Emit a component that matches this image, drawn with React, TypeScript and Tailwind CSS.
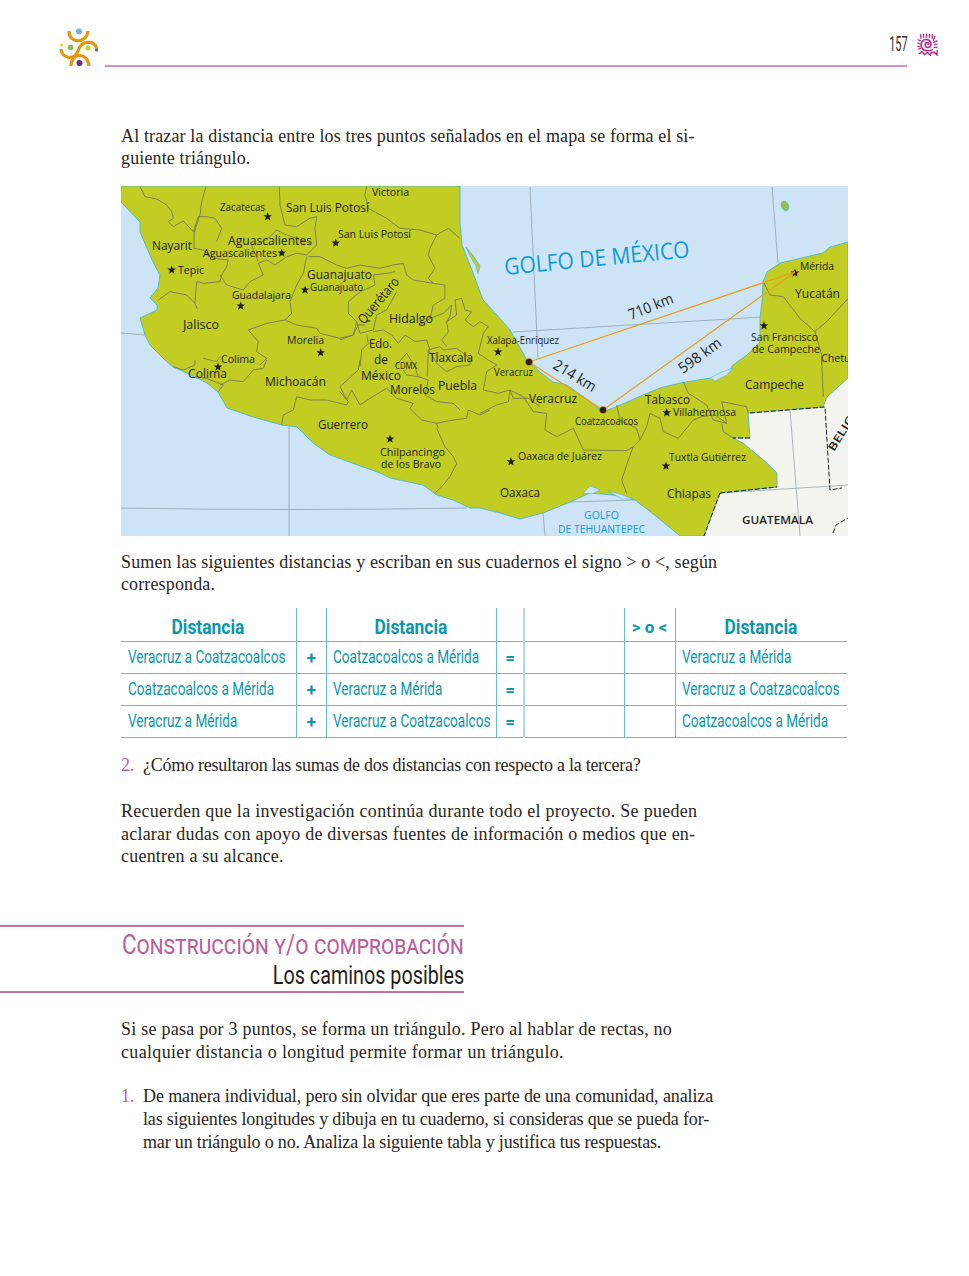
const ink = '#2a2522';

// label on the map, x/y = left end of the baseline, w = measured width
const Label = ({ t, x, y, w, s = 13, fill = '#231f20', rot = 0, weight = 400 }: { t: string; x: number; y: number; w: number; s?: number; fill?: string; rot?: number; weight?: number }) => (
  <text
    x={x}
    y={y}
    fontSize={s}
    fill={fill}
    fontWeight={weight}
    textLength={w}
    lengthAdjust="spacingAndGlyphs"
    transform={rot ? `rotate(${rot} ${x} ${y})` : undefined}
  >
    {t}
  </text>
);

const Star = ({ x, y, r = 4.6 }: { x: number; y: number; r?: number }) => {
  const pts = [];
  for (let i = 0; i < 10; i++) {
    const a = -Math.PI / 2 + (i * Math.PI) / 5;
    const d = i % 2 ? r * 0.42 : r;
    pts.push(`${(x + d * Math.cos(a)).toFixed(2)},${(y + d * Math.sin(a)).toFixed(2)}`);
  }
  return <polygon points={pts.join(' ')} fill="#231f20" />;
};

const labels = [
  { t: 'Victoria', x: 372, y: 196, w: 37, s: 11 },
  { t: 'Zacatecas', x: 220, y: 211, w: 45, s: 10 },
  { t: 'San Luis Potosí', x: 286, y: 212, w: 83, s: 12.5 },
  { t: 'San Luis Potosí', x: 338, y: 238, w: 73, s: 11 },
  { t: 'Nayarit', x: 152, y: 250, w: 40, s: 12.5 },
  { t: 'Aguascalientes', x: 228, y: 245, w: 84, s: 13 },
  { t: 'Aguascalientes', x: 203, y: 257, w: 74, s: 11 },
  { t: 'Tepic', x: 178, y: 274, w: 26, s: 11 },
  { t: 'Guanajuato', x: 307, y: 279, w: 65, s: 13 },
  { t: 'Guanajuato', x: 310, y: 291, w: 53, s: 10.5 },
  { t: 'Guadalajara', x: 232, y: 299, w: 59, s: 11 },
  { t: 'Querétaro', x: 364, y: 325, w: 56, s: 13.5, rot: -50 },
  { t: 'Hidalgo', x: 389, y: 323, w: 44, s: 13 },
  { t: 'Jalisco', x: 183, y: 329, w: 36, s: 13 },
  { t: 'Morelia', x: 287, y: 344, w: 37, s: 11.5 },
  { t: 'Edo.', x: 369, y: 348, w: 23, s: 13 },
  { t: 'de', x: 374, y: 364, w: 14, s: 13 },
  { t: 'Tlaxcala', x: 429, y: 362, w: 44, s: 13 },
  { t: 'Colima', x: 221, y: 363, w: 34, s: 11.5 },
  { t: 'CDMX', x: 395, y: 369, w: 22, s: 8.5 },
  { t: 'Colima', x: 188, y: 378, w: 39, s: 13 },
  { t: 'México', x: 361, y: 380, w: 40, s: 13 },
  { t: 'Michoacán', x: 265, y: 386, w: 61, s: 13 },
  { t: 'Morelos', x: 390, y: 394, w: 45, s: 13 },
  { t: 'Puebla', x: 438, y: 390, w: 39, s: 13 },
  { t: 'Guerrero', x: 318, y: 429, w: 50, s: 13 },
  { t: 'Chilpancingo', x: 380, y: 456, w: 65, s: 11.5 },
  { t: 'de los Bravo', x: 381, y: 468, w: 60, s: 11.5 },
  { t: 'Xalapa-Enríquez', x: 487, y: 344, w: 72, s: 10.5 },
  { t: 'Veracruz', x: 494, y: 376, w: 39, s: 10.5 },
  { t: 'Veracruz', x: 529, y: 403, w: 48, s: 13 },
  { t: 'Coatzacoalcos', x: 575, y: 425, w: 63, s: 10.5 },
  { t: 'Tabasco', x: 645, y: 404, w: 45, s: 13 },
  { t: 'Villahermosa', x: 673, y: 416, w: 63, s: 11 },
  { t: 'Oaxaca de Juárez', x: 518, y: 460, w: 84, s: 11 },
  { t: 'Tuxtla Gutiérrez', x: 669, y: 461, w: 77, s: 11 },
  { t: 'Oaxaca', x: 500, y: 497, w: 40, s: 13 },
  { t: 'Chiapas', x: 667, y: 498, w: 44, s: 13 },
  { t: 'Campeche', x: 745, y: 389, w: 59, s: 13 },
  { t: 'Mérida', x: 800, y: 270, w: 34, s: 11 },
  { t: 'Yucatán', x: 795, y: 298, w: 45, s: 13 },
  { t: 'San Francisco', x: 751, y: 341, w: 67, s: 11 },
  { t: 'de Campeche', x: 752, y: 353, w: 68, s: 11 },
  { t: 'Chetumal', x: 821, y: 362, w: 48, s: 11 },
  { t: 'GOLFO', x: 584, y: 519, w: 35, s: 11, fill: '#0f9bd7' },
  { t: 'DE TEHUANTEPEC', x: 558, y: 533, w: 87, s: 11, fill: '#0f9bd7' },
  { t: 'GUATEMALA', x: 742, y: 524, w: 71, s: 10, weight: 600 },
  { t: 'BELICE', x: 834, y: 452, w: 46, s: 11, rot: -58, weight: 600 },
  { t: 'GOLFO DE MÉXICO', x: 505, y: 275, w: 186, s: 23, fill: '#0f9bd7', rot: -5.5 },
  { t: '710 km', x: 631, y: 320, w: 47, s: 15, rot: -22 },
  { t: '598 km', x: 683, y: 374, w: 49, s: 15, rot: -36 },
  { t: '214 km', x: 552, y: 368, w: 47, s: 15, rot: 31 },
];

const stars = [
  [267.7, 216.7], [335.7, 243], [281.7, 253], [171.7, 270], [305, 290], [240.7, 306], [320.7, 352.7], [218, 367],
  [390, 439], [498, 352], [511, 461.7], [666.7, 412.7], [666, 466], [795, 273], [764, 325.7],
];

const MexicoMap = () => (
  <svg viewBox="121 186 727 350" className="block w-[727px] h-[350px]" style={{ fontFamily: '"Open Sans", sans-serif' }}>
    <rect x="121" y="186" width="727" height="350" fill="#cce4f5" />

    {/* Guatemala, Belice */}
    <polygon points="748,413 823,407 827,397 848,378 848,536 704,536 720,493 777,487 777,473 767,463 743,443 733,438 750,438" fill="#f4f4ee" />

    {/* graticule */}
    <g stroke="#8d9aa6" strokeWidth="0.7" fill="none">
      <path d="M530,187 L538,358" />
      <path d="M772,187 L778,263" />
      <path d="M513,332 L763,317" />
      <path d="M289,425 L289,536" />
      <path d="M121,333 L145,335" />
      <path d="M121,508 Q290,511 467,508" />
      <path d="M543,513 L545,536" />
      <path d="M570,502 L635,500" />
      <path d="M790,410 L800,536" />
      <path d="M720,493 L848,485" />
    </g>

    {/* land */}
    <path
      fill="#c1cd23"
      stroke="#3fb1d6"
      strokeWidth="0.8"
      d="M121,186 L460,186 L460,222 L462,245 L472,270 L483,300 L497,315 L510,330 L527,360 L540,372 L553,382 L567,385 L585,398 L603,412 L625,403 L643,395 L660,388 L680,383 L710,378 L727,373 L733,365 L747,355 L760,342 L760,318 L762,302 L763,282 L767,272 L780,263 L823,253 L830,247 L848,242 L848,378 L827,397 L823,407 L748,413 L750,438 L733,438 L743,443 L767,463 L777,473 L777,487 L720,493 L704,536 L680,536 L657,517 L635,500 L613,495 L590,493 L570,502 L543,513 L520,519 L500,513 L480,508 L470,508 L453,500 L437,495 L423,485 L390,478 L380,473 L330,455 L313,443 L297,427 L282,425 L253,417 L227,408 L218,392 L207,383 L187,373 L173,367 L165,360 L150,345 L145,335 L140,318 L157,310 L157,305 L150,298 L158,288 L160,275 L153,262 L140,232 L140,222 L121,202 Z"
    />

    {/* lagoons and island */}
    <path d="M466,247 L472,254 L480,266 L478,274 L476,266 L470,256 Z" fill="#c1cd23" stroke="#3fb1d6" strokeWidth="0.6" />
    <g fill="#cce4f5" stroke="#3fb1d6" strokeWidth="0.5">
      <path d="M583,493 L590,486 L600,490 L592,494 Z" />
      <path d="M608,491 L620,494 L633,499 L622,499 Z" />
      <path d="M710,378 L722,372 L733,368 L727,375 L715,381 Z" />
    </g>
    <ellipse cx="785" cy="206" rx="3.5" ry="5" fill="#9dbf3a" stroke="#3fb1d6" strokeWidth="0.6" transform="rotate(-25 785 206)" />

    {/* state borders, traced on 3x crops */}
    <g fill="none" stroke="#6f6f5c" strokeWidth="2.4" strokeLinejoin="round">
      <g transform="translate(120 185) scale(0.3333)">
        <path d="M60,5 L75,35 110,42 140,60 155,80 160,100 145,110 160,125 190,108 220,140 235,95 260,95 285,100 305,130 290,170" />
        <path d="M258,5 L245,50 240,90 222,145 222,190 250,195 280,220 325,225 320,245 305,270 300,290 250,295 230,290 225,355 200,330 150,320 115,345" />
        <path d="M225,355 L232,372" />
        <path d="M300,270 L320,300 370,315 390,290 430,270 415,235 440,225 465,240 500,215 530,205 560,210 590,180 585,130 590,95 570,100 530,125 495,120 480,60 478,5" />
        <path d="M415,230 L395,180 440,165 470,135 500,150 530,160 570,175" />
        <path d="M565,215 L600,215 650,240 680,250 720,240 780,250 820,240 850,235 860,270 880,285 940,295 975,300 975,340 940,360 930,400 900,420" />
        <path d="M560,215 L550,265 530,300 510,350 515,385 495,405 440,415 385,435 415,470 410,500 440,520 420,540" />
        <path d="M495,405 L530,420 590,430 600,445 660,460 700,450 715,420 735,420" />
        <path d="M740,5 L735,30 745,70 800,100 840,130 900,135 950,150 930,190 925,210 945,250 925,280 940,295" />
        <path d="M950,150 L985,130 1020,160" />
        <path d="M250,520 L290,530 300,515" />
      </g>
      <g transform="translate(340 270) scale(0.3333)">
        <path d="M25,95 L60,65 105,45 100,15 140,10 165,5" />
        <path d="M25,95 L25,130 50,155 60,190 100,180 110,135 140,120 170,65" />
        <path d="M100,185 L130,180 155,195 175,220 195,195 225,215 260,210 270,240" />
        <path d="M265,240 L300,230 310,240 350,235 390,265 390,285 350,290 320,305 290,280 275,255 Z" />
        <path d="M270,145 L310,130 335,105 330,140 320,155 325,185 305,210 320,230" />
        <path d="M320,155 L350,135 345,90 365,85 375,120 395,125 375,150 400,170 420,155 445,170 430,190 415,250 445,270 470,285 440,305 430,360 475,370 510,360 520,385 565,385 600,410" />
        <path d="M80,195 L85,220 65,240 60,290" />
        <path d="M165,290 L200,250 225,290 235,320 200,315 190,300" />
        <path d="M235,320 L265,330 255,375 290,395 340,400 360,420" />
        <path d="M265,240 L262,320" />
        <path d="M50,155 L40,195 0,210" />
      </g>
      <g transform="translate(120 360) scale(0.3333)">
        <path d="M720,0 L715,30 660,80 680,120 695,90 720,135 750,115 800,85 830,115 880,130 870,145 905,180 950,190 1000,180 1040,175 1045,150 1080,165 1110,150" />
        <path d="M485,195 L490,165 520,150 530,110 570,120 620,120 680,135 685,125 660,95" />
        <path d="M160,20 L190,30 225,15 225,0" />
        <path d="M225,50 L260,55 310,75 295,95" />
        <path d="M300,75 L330,60 370,65 400,30 430,25 440,0" />
        <path d="M950,205 L975,260 1000,290 1010,310 990,350 970,375 945,400" />
        <path d="M950,190 L955,205" />
      </g>
      <g transform="translate(480 360) scale(0.3333)">
        <path d="M0,160 L50,135 85,125 90,90 130,110 160,155 200,160 195,210 230,230 280,205 310,270 440,272 460,260 480,240 500,200 510,160 540,175 550,215 595,235 640,180 665,170 705,165 740,190" />
        <path d="M460,260 L445,300 425,360 440,400" />
        <path d="M410,135 L420,180 470,205 480,240" />
        <path d="M610,65 L625,100 680,135 700,180 740,190 725,125 800,140 805,160" />
        <path d="M725,190 L730,215 760,235" />
        <path d="M1025,0 L1030,110" />
      </g>
      <g transform="translate(480 185) scale(0.3333)">
        <path d="M850,290 L870,330 910,335 960,400 1005,440 1025,510 1025,540" />
        <path d="M1005,440 L1040,410 1105,340" />
      </g>
    </g>

    {/* dashed frontiers */}
    <g fill="none" stroke="#231f20" strokeWidth="1" strokeDasharray="5 2">
      <path d="M750,413 L825,407 L830,490 L842,488" />
      <path d="M750,438 L733,438" />
      <path d="M720,493 L777,487" />
      <path d="M720,493 L704,536" />
      <path d="M833,533 L836,525 L848,518" />
    </g>

    {stars.map(([x, y], i) => (
      <Star key={i} x={x} y={y} />
    ))}

    {/* triangle */}
    <g fill="none" stroke="#e8a013" strokeWidth="1.3">
      <path d="M529,362 L795,272 L603,410 Z" />
    </g>
    <circle cx="529" cy="362" r="3.6" fill="#231f20" stroke="#e8a013" strokeWidth="0.6" />
    <circle cx="603" cy="410" r="3.6" fill="#231f20" stroke="#e8a013" strokeWidth="0.6" />

    {labels.map((l, i) => (
      <Label key={i} {...l} />
    ))}
  </svg>
);

const Logo = () => (
  <svg viewBox="0 0 60 55" className="absolute left-[50px] top-[20px] w-[60px] h-[55px]" fill="none">
    <g stroke="#e0980f" strokeWidth="3.2">
      <path d="M19,11 C19,24 37,24 38,11" />
      <path d="M11,29 C12,39 25,41 28.5,30 C31,21 44,19 47,29" />
      <path d="M21,46 C21,32 38,32 39,46" />
    </g>
    <circle cx="29" cy="11.5" r="2.9" fill="#6db3e6" />
    <circle cx="20.5" cy="27.5" r="2.8" fill="#8dbb5c" />
    <circle cx="38" cy="28" r="2.6" fill="#c6d22a" />
    <circle cx="29.5" cy="43" r="3" fill="#6f2a8e" />
    <circle cx="11.5" cy="25" r="1.5" fill="#f2c81d" />
    <circle cx="46.5" cy="30" r="1.6" fill="#2275b8" />
  </svg>
);

const Spiral = () => (
  <svg viewBox="0 0 22 24" className="w-[21px] h-[23px]" fill="none" stroke="#c4228d" strokeWidth="1.7">
    <path d="M11,12.5 C12.5,11.5 12.5,10 10.5,10 C8,10 7.5,14 10.5,15 C14,16 16,12 14,9 C12,6 7,6 5,9.5 C3,13.5 5,18 10,18.5 C13,18.8 15,18.5 16.5,17" />
    <path d="M4,1 L4,6 M7,1 L7,5 M10,0.5 L10,5 M13,1 L13,5 M16,1 L16,6 M19,3 L17,8" strokeWidth="1.4" />
    <path d="M0.5,7 L4,8 M0.5,10.5 L3.5,11 M0.5,14 L3.5,14 M1,17 L4,16 M21.5,8 L17,10 M21.5,11.5 L17.5,12.5 M21.5,15 L17.5,15" strokeWidth="1.3" />
    <path d="M2,22 L5,19.5 L8,22.5 L11,20.5 L14,23 L15,20.5 L18,20 L21,23 L21,18" strokeWidth="1.5" />
  </svg>
);

const cellLine = 'border-[#62c0cb]';
const rows = [
  ['Veracruz a Coatzacoalcos', 'Coatzacoalcos a Mérida', 'Veracruz a Mérida'],
  ['Coatzacoalcos a Mérida', 'Veracruz a Mérida', 'Veracruz a Coatzacoalcos'],
  ['Veracruz a Mérida', 'Veracruz a Coatzacoalcos', 'Coatzacoalcos a Mérida'],
];

// no condensed face is installed, so the narrow sans is squeezed
const Narrow = ({ children }: { children: string }) => (
  <span className="inline-block origin-left scale-x-[0.755]">{children}</span>
);

const Heading = () => <span className="inline-block scale-x-[0.83]">Distancia</span>;

const DistanceTable = () => (
  <table className="mt-[12px] w-[726px] table-fixed border-collapse text-[#0a97ad] [font-family:'Roboto',sans-serif]">
    <colgroup>
      <col className="w-[175px]" />
      <col className="w-[30px]" />
      <col className="w-[170px]" />
      <col className="w-[28px]" />
      <col className="w-[100px]" />
      <col className="w-[51px]" />
      <col />
    </colgroup>
    <thead>
      <tr className="h-[33px] text-[21px] font-bold">
        <th className={`border-r border-b ${cellLine} pt-[5px]`}><Heading /></th>
        <th className={`border-r border-b ${cellLine}`}></th>
        <th className={`border-r border-b ${cellLine} pt-[5px]`}><Heading /></th>
        <th className={`border-r-2 border-b border-r-[#a9dde3] ${cellLine}`}></th>
        <th className={`border-r border-b ${cellLine}`}></th>
        <th className={`border-r border-b ${cellLine} pt-[5px] text-[17px]`}>&gt; o &lt;</th>
        <th className={`border-b ${cellLine} pt-[5px]`}><Heading /></th>
      </tr>
    </thead>
    <tbody>
      {rows.map((r, i) => (
        <tr key={i} className="h-[32px] text-[18px]">
          <td className={`border-r border-b ${cellLine} pl-[7px] whitespace-nowrap`}><Narrow>{r[0]}</Narrow></td>
          <td className={`border-r border-b ${cellLine} text-center font-bold text-[17px] pt-[3px] pl-[1px]`}>+</td>
          <td className={`border-r border-b ${cellLine} pl-[6px] whitespace-nowrap`}><Narrow>{r[1]}</Narrow></td>
          <td className={`border-r-2 border-b border-r-[#a9dde3] ${cellLine} text-center font-bold text-[17px] pt-[3px] pl-[1px]`}>=</td>
          <td className={`border-r border-b ${cellLine}`}></td>
          <td className={`border-r border-b ${cellLine}`}></td>
          <td className={`border-b ${cellLine} pl-[6px] whitespace-nowrap`}><Narrow>{r[2]}</Narrow></td>
        </tr>
      ))}
    </tbody>
  </table>
);

const App = () => (
  <div className="w-[969px] h-[1276px] bg-white overflow-hidden [font-family:'Liberation_Serif',serif] text-[18px] leading-[22.5px]" style={{ color: ink }}>
    {/* Page header */}
    <header className="relative h-[67px]">
      <Logo />
      <div className="absolute left-[105px] top-[65px] w-[802px] h-[2px] bg-[#da90c6]" />
      <div className="absolute right-[31px] top-[32px] flex items-center gap-[9px]">
        <span className="inline-block origin-right scale-x-[0.55] text-[20px] leading-[24px] text-[#333] [font-family:'Roboto',sans-serif]">157</span>
        <Spiral />
      </div>
    </header>

    <div className="pl-[121px]">
      <p className="mt-[58px] whitespace-nowrap tracking-[0.14px] leading-[22px]">
        Al trazar la distancia entre los tres puntos señalados en el mapa se forma el si-
        <br />
        guiente triángulo.
      </p>

      <div className="mt-[17px]">
        <MexicoMap />
      </div>

      <p className="mt-[15px] whitespace-nowrap tracking-[0.13px] leading-[22px]">
        Sumen las siguientes distancias y escriban en sus cuadernos el signo &gt; o &lt;, según
        <br />
        corresponda.
      </p>

      <div className="pt-[1px]">
        <DistanceTable />
      </div>

      <p className="mt-[16px] flex whitespace-nowrap tracking-[-0.25px]">
        <span className="w-[22px] text-[#b9609f]">2.</span>
        ¿Cómo resultaron las sumas de dos distancias con respecto a la tercera?
      </p>

      <p className="mt-[24px] whitespace-nowrap tracking-[0.22px]">
        <span className="tracking-[0.28px]">Recuerden que la investigación continúa durante todo el proyecto. Se pueden</span>
        <br />
        aclarar dudas con apoyo de diversas fuentes de información o medios que en-
        <br />
        cuentren a su alcance.
      </p>
    </div>

    {/* Section heading */}
    <div className="mt-[57px] w-[464px] h-[68px] border-y-2 border-[#c670aa] text-right pt-[3px] whitespace-nowrap [font-family:'Roboto',sans-serif]">
      <div className="text-[27px] leading-[30px] text-[#b9609f] [font-variant:small-caps]">
        <span className="inline-block origin-right scale-x-[0.83]">Construcción y/o comprobación</span>
      </div>
      <div className="mt-[1px] text-[25px] leading-[30px] text-[#231f20]">
        <span className="inline-block origin-right scale-x-[0.79]">Los caminos posibles</span>
      </div>
    </div>

    <div className="pl-[121px] leading-[23px]">
      <p className="mt-[25px] whitespace-nowrap tracking-[0.34px]">
        <span className="tracking-[0.24px]">Si se pasa por 3 puntos, se forma un triángulo. Pero al hablar de rectas, no</span>
        <br />
        cualquier distancia o longitud permite formar un triángulo.
      </p>

      <div className="mt-[21px] flex whitespace-nowrap tracking-[-0.165px]">
        <span className="w-[22px] text-[#b9609f]">1.</span>
        <p>
          <span className="tracking-[-0.11px]">De manera individual, pero sin olvidar que eres parte de una comunidad, analiza</span>
          <br />
          las siguientes longitudes y dibuja en tu cuaderno, si consideras que se pueda for-
          <br />
          mar un triángulo o no. Analiza la siguiente tabla y justifica tus respuestas.
        </p>
      </div>
    </div>
  </div>
);

export default App;
